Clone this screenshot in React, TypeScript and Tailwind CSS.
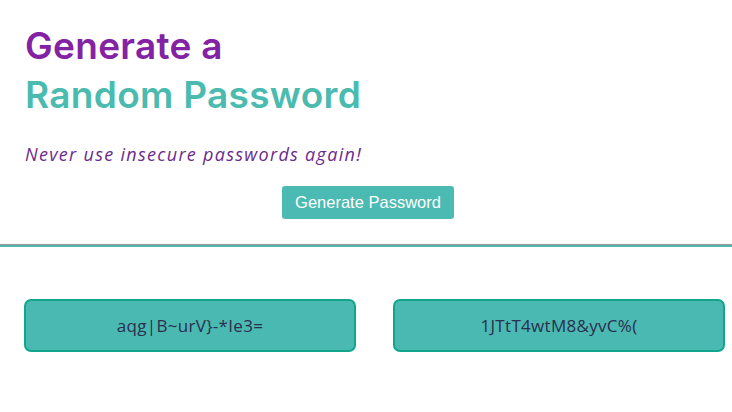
export default function App() {
  const passwords = ['aqg|B~urV}-*Ie3=', '1JTtT4wtM8&yvC%('];

  return (
    <div className="w-[732px] h-[412px] bg-white overflow-hidden font-['Inter',sans-serif]">
      {/* Header */}
      <div className="px-[25px] pt-[21px]">
        <h1 className="text-[37px] leading-[49px] font-semibold tracking-[0.3px]">
          <span className="block text-[#8322a3]">Generate a</span>
          <span className="block text-[#4bbbb0]">Random Password</span>
        </h1>
        <p className="mt-[23px] text-[18px] leading-[24px] italic text-[#6c2b8c] tracking-[1.3px] font-['Open_Sans',sans-serif]">
          Never use insecure passwords again!
        </p>
      </div>

      <div className="flex justify-center mt-[20px]">
        <button className="w-[172px] h-[33px] ml-[4px] bg-[#4bbab2] text-white text-[16.5px] rounded-[3px] font-['Liberation_Sans',Arial,sans-serif]">
          Generate Password
        </button>
      </div>

      {/* Divider */}
      <div className="mt-[25px] border-t border-[#9a9a9a] h-[3px] bg-[#4fb8ae]" />

      {/* Password boxes */}
      <div className="grid grid-cols-[332px_332px] gap-[37px] pl-[24px] mt-[52px]">
        {passwords.map((pw) => (
          <div
            key={pw}
            className="h-[53px] flex items-center justify-center bg-[#4ab9b1] border-2 border-[#12a68e] rounded-[7px] text-[17px] tracking-[0.3px] text-[#2a2f4f] font-['Open_Sans',sans-serif]"
          >
            {pw}
          </div>
        ))}
      </div>
    </div>
  );
}
